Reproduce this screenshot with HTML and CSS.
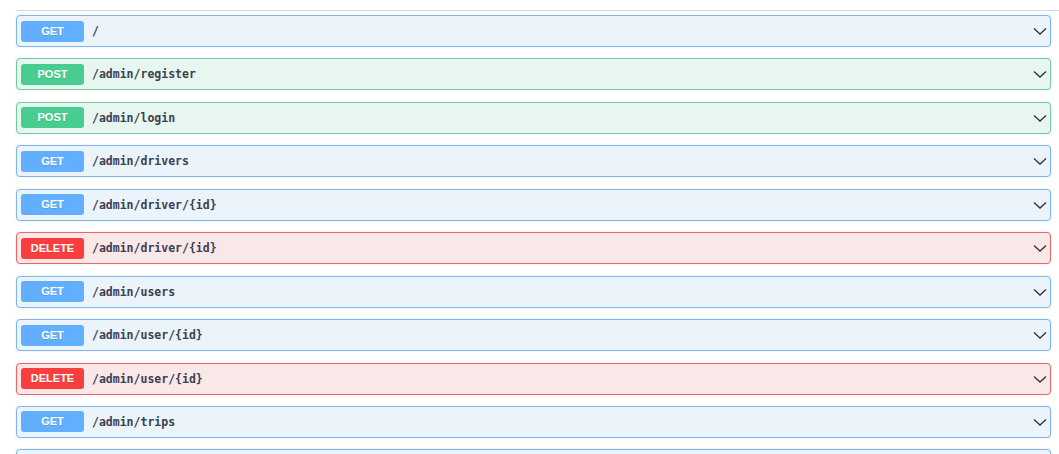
FILE: index.html
```html
<!DOCTYPE html>
<html lang="en">
<head>
    <meta charset="UTF-8">
    <title>API Docs</title>
    <link rel="stylesheet" href="styles.css">
</head>
<body>
    <div class="wrapper">
        <div class="tag-line"></div>

        <div class="opblock get">
            <span class="method">GET</span>
            <span class="path">/</span>
            <svg class="arrow" viewBox="0 0 16 16"><path d="M2 5.5 L8 11 L14 5.5"/></svg>
        </div>
        <div class="opblock post">
            <span class="method">POST</span>
            <span class="path">/admin/register</span>
            <svg class="arrow" viewBox="0 0 16 16"><path d="M2 5.5 L8 11 L14 5.5"/></svg>
        </div>
        <div class="opblock post">
            <span class="method">POST</span>
            <span class="path">/admin/login</span>
            <svg class="arrow" viewBox="0 0 16 16"><path d="M2 5.5 L8 11 L14 5.5"/></svg>
        </div>
        <div class="opblock get">
            <span class="method">GET</span>
            <span class="path">/admin/drivers</span>
            <svg class="arrow" viewBox="0 0 16 16"><path d="M2 5.5 L8 11 L14 5.5"/></svg>
        </div>
        <div class="opblock get">
            <span class="method">GET</span>
            <span class="path">/admin/driver/{id}</span>
            <svg class="arrow" viewBox="0 0 16 16"><path d="M2 5.5 L8 11 L14 5.5"/></svg>
        </div>
        <div class="opblock delete">
            <span class="method">DELETE</span>
            <span class="path">/admin/driver/{id}</span>
            <svg class="arrow" viewBox="0 0 16 16"><path d="M2 5.5 L8 11 L14 5.5"/></svg>
        </div>
        <div class="opblock get">
            <span class="method">GET</span>
            <span class="path">/admin/users</span>
            <svg class="arrow" viewBox="0 0 16 16"><path d="M2 5.5 L8 11 L14 5.5"/></svg>
        </div>
        <div class="opblock get">
            <span class="method">GET</span>
            <span class="path">/admin/user/{id}</span>
            <svg class="arrow" viewBox="0 0 16 16"><path d="M2 5.5 L8 11 L14 5.5"/></svg>
        </div>
        <div class="opblock delete">
            <span class="method">DELETE</span>
            <span class="path">/admin/user/{id}</span>
            <svg class="arrow" viewBox="0 0 16 16"><path d="M2 5.5 L8 11 L14 5.5"/></svg>
        </div>
        <div class="opblock get">
            <span class="method">GET</span>
            <span class="path">/admin/trips</span>
            <svg class="arrow" viewBox="0 0 16 16"><path d="M2 5.5 L8 11 L14 5.5"/></svg>
        </div>
        <!-- next row only peeks in at the bottom edge -->
        <div class="opblock get"></div>
    </div>
</body>
</html>
```

FILE: styles.css
```css
body {
    margin: 0;
    padding: 0;
    background: #fff;
    font-family: "Liberation Sans", Arial, sans-serif;
    overflow: hidden;
}

.wrapper {
    padding: 10px 8px 0 16px;
}

.tag-line {
    height: 1px;
    background: #d5d7dc;
    margin-right: -8px;
    margin-bottom: 4px;
}

/* operation rows */
.opblock {
    display: flex;
    align-items: center;
    box-sizing: border-box;
    height: 32px;
    padding: 0 2px 0 4px;
    margin-bottom: 11.45px;
    border: 1px solid;
    border-radius: 4px;
    box-shadow: 0 0 2px rgba(0, 0, 0, 0.12);
}

.method {
    width: 63px;
    height: 21px;
    line-height: 21px;
    border-radius: 3px;
    color: #fff;
    font-size: 11px;
    font-weight: bold;
    text-align: center;
    text-shadow: 0 1px 0 rgba(0, 0, 0, 0.1);
}

.path {
    flex: 1;
    padding-left: 8px;
    font-family: "DejaVu Sans Mono", "Liberation Mono", monospace;
    font-size: 11.5px;
    font-weight: bold;
    color: #3b4151;
}

.arrow {
    width: 16px;
    height: 16px;
    fill: none;
    stroke: #333;
    stroke-width: 1.3;
}

.get {
    background: #ebf3fb;
    border-color: #7db6ee;
}
.get .method {
    background: #61affe;
}

.post {
    background: #e8f6f0;
    border-color: #6fcea2;
}
.post .method {
    background: #49cc90;
}

.delete {
    background: #fae7e7;
    border-color: #f26565;
}
.delete .method {
    background: #f93e3e;
}
```
